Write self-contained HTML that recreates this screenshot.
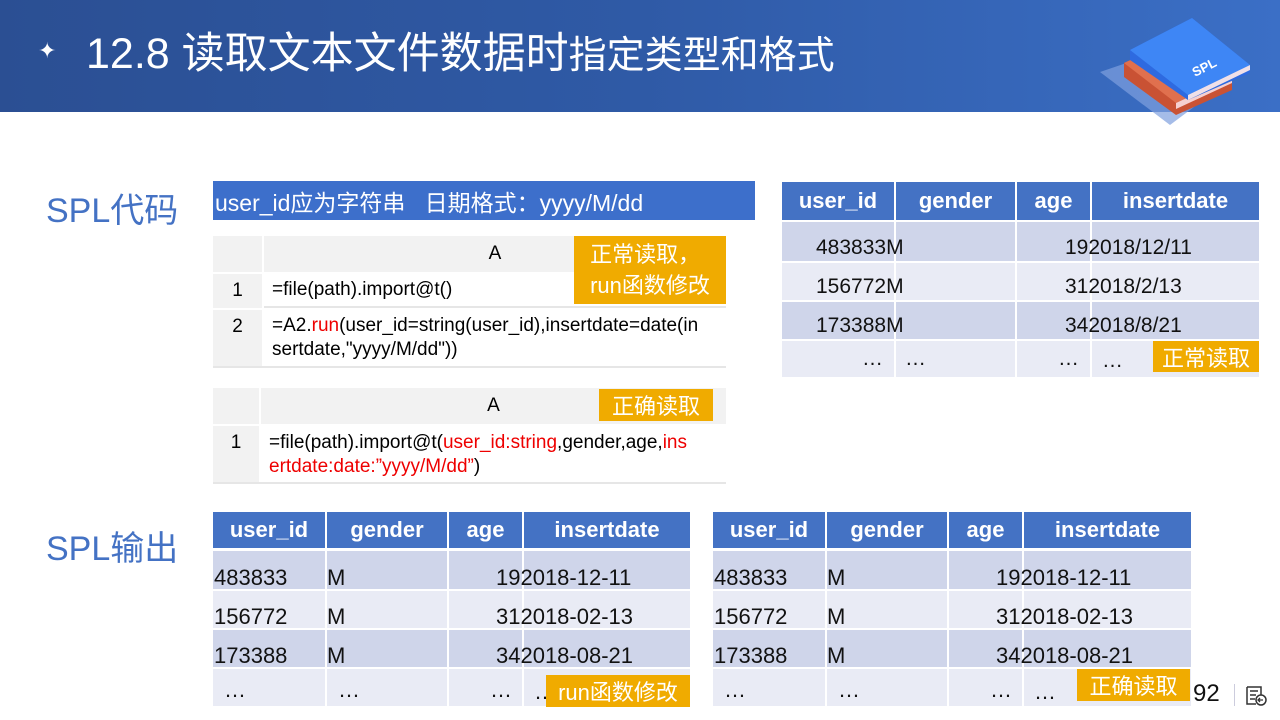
<!DOCTYPE html>
<html><head><meta charset="utf-8"><style>
*{margin:0;padding:0;box-sizing:border-box}
body{width:1280px;height:720px;position:relative;overflow:hidden;background:#fff;font-family:"Liberation Sans","Noto Sans CJK SC",sans-serif}
.a{position:absolute}
.hdr{left:0;top:0;width:1280px;height:112px;background:linear-gradient(90deg,#2b4f93 0%,#2f5aa6 50%,#3b6fc6 100%)}
.c{position:absolute;display:flex;align-items:center;white-space:nowrap}
.th{background:#4472c4;color:#fff;font-weight:bold;font-size:22px;justify-content:center}
.r1{background:#cfd5ea}.r2{background:#e9ebf5}
.cell{font-size:22px;color:#111;white-space:nowrap}
.tr .cell{font-size:21px}
.g{background:#f2f2f2}
.or{background:#f0ab00;color:#fff;font-size:22px;justify-content:center}
.red{color:#e00}
</style></head><body>
<div class="a hdr"></div>
<div class="a" style="left:38px;top:38px;color:#fff;font-size:22px">✦</div>
<div class="a" style="left:86px;top:27px;color:#fff;font-size:43px;white-space:nowrap;line-height:54px">12.8 读取文本文件数据时<span style="font-size:38px">指定类型和格式</span></div>
<svg class="a" style="left:1100px;top:15px" width="160" height="110" viewBox="0 0 160 110">
<polygon points="0,57 50,40 110,80 70,110" fill="#7fa0de" opacity="0.7"/>
<polygon points="24,48 80,22 132,62 132,75 76,100 24,62" fill="#c95234"/>
<polygon points="24,48 80,22 132,62 76,88" fill="#e0704e"/>
<polygon points="76,88 132,62 132,68 76,94" fill="#f5d0d0"/>
<polygon points="30,35 92,3 150,50 150,58 88,85 30,45" fill="#2e6ae0"/>
<polygon points="30,35 92,3 150,50 88,80" fill="#3e86f5"/>
<polygon points="88,80 150,50 150,55 88,85" fill="#f0e0e8"/>
<text x="95" y="62" fill="#fff" font-size="13" font-weight="bold" transform="rotate(-27 95 62)" font-family="Liberation Sans">SPL</text>
</svg>
<div class="a" style="left:46px;top:183px;color:#4472c4;font-size:34px">SPL代码</div>
<div class="a" style="left:46px;top:521px;color:#4472c4;font-size:34px">SPL输出</div>
<div class="c" style="left:213px;top:181px;width:542px;height:39px;background:#3d6fcb;color:#fff;font-size:23px;padding-left:2px">user_id应为字符串&nbsp;&nbsp;&nbsp;日期格式：yyyy/M/dd</div>

<div class="c g" style="left:213px;top:236px;width:49px;height:36px"></div>
<div class="c g" style="left:264px;top:236px;width:462px;height:36px;justify-content:center;font-size:19px">A</div>
<div class="c g" style="left:213px;top:274px;width:49px;height:34px;justify-content:center;font-size:19px">1</div>
<div class="c" style="left:264px;top:274px;width:462px;height:34px;padding-left:8px;font-size:19px;border-bottom:2px solid #e6e6e6">=file(path).import@t()</div>
<div class="c g" style="left:213px;top:310px;width:49px;height:57px;justify-content:center;align-items:flex-start;padding-top:6px;font-size:19px">2</div>
<div class="a" style="left:272px;top:314px;width:428px;font-size:19px;line-height:24px;word-break:break-all">=A2.<span class="red">run</span>(user_id=string(user_id),insertdate=date(insertdate,"yyyy/M/dd"))</div>
<div class="a" style="left:213px;top:366px;width:513px;height:2px;background:#e6e6e6"></div>
<div class="c or" style="left:574px;top:236px;width:152px;height:68px;flex-direction:column;line-height:31px">正常读取，<br>run函数修改</div>

<div class="c g" style="left:213px;top:388px;width:46px;height:36px"></div>
<div class="c g" style="left:261px;top:388px;width:465px;height:36px;justify-content:center;font-size:19px">A</div>
<div class="c g" style="left:213px;top:426px;width:46px;height:57px;justify-content:center;align-items:flex-start;padding-top:6px;font-size:19px">1</div>
<div class="a" style="left:269px;top:431px;width:424px;font-size:19px;line-height:24px;word-break:break-all">=file(path).import@t(<span class="red">user_id:string</span>,gender,age,<span class="red">insertdate:date:”yyyy/M/dd”</span>)</div>
<div class="a" style="left:213px;top:482px;width:513px;height:2px;background:#e6e6e6"></div>
<div class="c or" style="left:599px;top:389px;width:114px;height:32px">正确读取</div>

<div class="tr">
<div class="c th" style="left:782px;top:182px;width:112px;height:38px">user_id</div>
<div class="c th" style="left:896px;top:182px;width:119px;height:38px">gender</div>
<div class="c th" style="left:1017px;top:182px;width:73px;height:38px">age</div>
<div class="c th" style="left:1092px;top:182px;width:167px;height:38px">insertdate</div>
<div class="a r1" style="left:782px;top:222px;width:477px;height:39px"></div>
<div class="a r2" style="left:782px;top:263px;width:477px;height:37px"></div>
<div class="a r1" style="left:782px;top:302px;width:477px;height:37px"></div>
<div class="a r2" style="left:782px;top:341px;width:477px;height:36px"></div>
<div class="a" style="left:894px;top:222px;width:2px;height:155px;background:#fff"></div>
<div class="a" style="left:1015px;top:222px;width:2px;height:155px;background:#fff"></div>
<div class="a" style="left:1090px;top:222px;width:2px;height:155px;background:#fff"></div>
<div class="a cell" style="left:816px;top:236px">483833M</div><div class="a cell" style="left:1065px;top:236px">192018/12/11</div>
<div class="a cell" style="left:816px;top:275px">156772M</div><div class="a cell" style="left:1065px;top:275px">312018/2/13</div>
<div class="a cell" style="left:816px;top:314px">173388M</div><div class="a cell" style="left:1065px;top:314px">342018/8/21</div>
<div class="a cell" style="left:862px;top:347px">…</div><div class="a cell" style="left:905px;top:347px">…</div><div class="a cell" style="left:1058px;top:347px">…</div><div class="a cell" style="left:1102px;top:349px">…</div>
<div class="c or" style="left:1153px;top:341px;width:106px;height:31px">正常读取</div>
</div>

<div class="c th" style="left:213px;top:512px;width:112px;height:36px">user_id</div>
<div class="c th" style="left:327px;top:512px;width:120px;height:36px">gender</div>
<div class="c th" style="left:449px;top:512px;width:73px;height:36px">age</div>
<div class="c th" style="left:524px;top:512px;width:166px;height:36px">insertdate</div>
<div class="a r1" style="left:213px;top:551px;width:477px;height:38px"></div>
<div class="a r2" style="left:213px;top:591px;width:477px;height:37px"></div>
<div class="a r1" style="left:213px;top:630px;width:477px;height:37px"></div>
<div class="a r2" style="left:213px;top:669px;width:477px;height:37px"></div>
<div class="a" style="left:325px;top:551px;width:2px;height:155px;background:#fff"></div>
<div class="a" style="left:447px;top:551px;width:2px;height:155px;background:#fff"></div>
<div class="a" style="left:522px;top:551px;width:2px;height:155px;background:#fff"></div>
<div class="a cell" style="left:214px;top:565px">483833</div><div class="a cell" style="left:327px;top:565px">M</div><div class="a cell" style="left:496px;top:565px">192018-12-11</div>
<div class="a cell" style="left:214px;top:604px">156772</div><div class="a cell" style="left:327px;top:604px">M</div><div class="a cell" style="left:496px;top:604px">312018-02-13</div>
<div class="a cell" style="left:214px;top:643px">173388</div><div class="a cell" style="left:327px;top:643px">M</div><div class="a cell" style="left:496px;top:643px">342018-08-21</div>
<div class="a cell" style="left:224px;top:677px">…</div><div class="a cell" style="left:338px;top:677px">…</div><div class="a cell" style="left:490px;top:677px">…</div><div class="a cell" style="left:534px;top:679px">…</div>
<div class="c or" style="left:546px;top:675px;width:144px;height:32px">run函数修改</div>

<div class="c th" style="left:713px;top:512px;width:112px;height:36px">user_id</div>
<div class="c th" style="left:827px;top:512px;width:120px;height:36px">gender</div>
<div class="c th" style="left:949px;top:512px;width:73px;height:36px">age</div>
<div class="c th" style="left:1024px;top:512px;width:167px;height:36px">insertdate</div>
<div class="a r1" style="left:713px;top:551px;width:478px;height:38px"></div>
<div class="a r2" style="left:713px;top:591px;width:478px;height:37px"></div>
<div class="a r1" style="left:713px;top:630px;width:478px;height:37px"></div>
<div class="a r2" style="left:713px;top:669px;width:478px;height:37px"></div>
<div class="a" style="left:825px;top:551px;width:2px;height:155px;background:#fff"></div>
<div class="a" style="left:947px;top:551px;width:2px;height:155px;background:#fff"></div>
<div class="a" style="left:1022px;top:551px;width:2px;height:155px;background:#fff"></div>
<div class="a cell" style="left:714px;top:565px">483833</div><div class="a cell" style="left:827px;top:565px">M</div><div class="a cell" style="left:996px;top:565px">192018-12-11</div>
<div class="a cell" style="left:714px;top:604px">156772</div><div class="a cell" style="left:827px;top:604px">M</div><div class="a cell" style="left:996px;top:604px">312018-02-13</div>
<div class="a cell" style="left:714px;top:643px">173388</div><div class="a cell" style="left:827px;top:643px">M</div><div class="a cell" style="left:996px;top:643px">342018-08-21</div>
<div class="a cell" style="left:724px;top:677px">…</div><div class="a cell" style="left:838px;top:677px">…</div><div class="a cell" style="left:990px;top:677px">…</div><div class="a cell" style="left:1034px;top:679px">…</div>
<div class="c or" style="left:1077px;top:669px;width:113px;height:32px">正确读取</div>

<div class="a" style="left:1193px;top:680px;font-size:24px;color:#111">92</div>
<div class="a" style="left:1234px;top:684px;width:1px;height:22px;background:#ccd"></div>
<svg class="a" style="left:1245px;top:685px" width="24" height="22" viewBox="0 0 24 22"><path d="M2 2h14v8M2 2v17h9M5 6h8M5 10h6M5 14h5" stroke="#333" stroke-width="1.5" fill="none"/><circle cx="16" cy="15" r="5" stroke="#333" stroke-width="1.5" fill="none"/><path d="M18 15h-5m2-2l-2 2 2 2" stroke="#333" stroke-width="1.3" fill="none"/></svg>
</body></html>
